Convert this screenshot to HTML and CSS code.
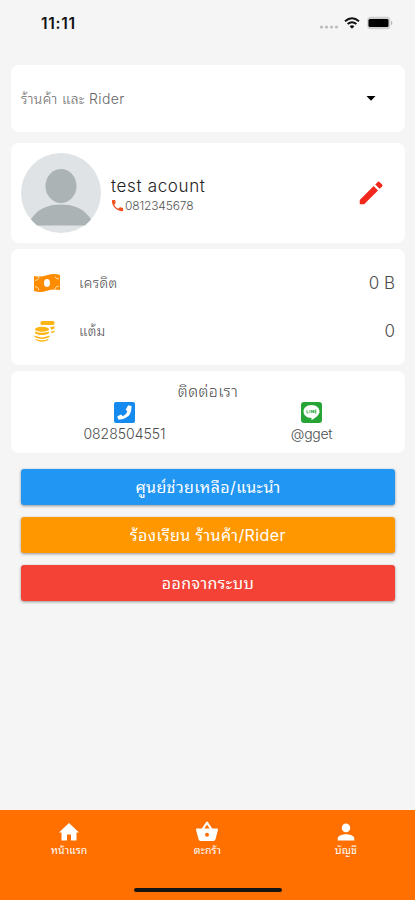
FILE: index.html
```html
<!DOCTYPE html>
<html lang="th">
<head>
<meta charset="utf-8">
<meta name="viewport" content="width=device-width, initial-scale=1">
<title>บัญชี</title>
<link rel="stylesheet" href="styles.css">
</head>
<body>
<div class="app">
  <header class="status">
    <span class="time">11:11</span>
    <div class="signals">
      <svg width="20" height="6" viewBox="0 0 20 6" fill="#bcbcbc"><circle cx="2.5" cy="3" r="1.6"/><circle cx="7.5" cy="3" r="1.6"/><circle cx="12.500" cy="3" r="1.6"/><circle cx="17.500" cy="3" r="1.6"/></svg>
      <svg class="wifi" width="16" height="12" viewBox="0 0 16 12" fill="none" stroke="#111" stroke-width="2"><path d="M1 4.300Q8-1.800 15 4.300M3.600 7.100Q8 3.300 12.400 7.100"/><path d="M5.600 9.200Q8 7.200 10.400 9.200L8 11.800z" fill="#111" stroke="none"/></svg>
      <svg width="27" height="14" viewBox="0 0 27 14"><rect x=".3" y=".8" width="23" height="12.400" rx="3.500" fill="#cfcfcf"/><rect x="1.500" y="3" width="20" height="8" rx="1.500" fill="#000"/><path d="M24.200 4.500q2.200 2.500 0 5z" fill="#aaa"/></svg>
    </div>
  </header>

  <main class="content">
    <section class="card picker">
      <span class="picker-label">ร้านค้า และ Rider</span>
      <svg width="10" height="5" viewBox="0 0 10 5"><path d="M.5 0h9L5 4.800z" fill="#000"/></svg>
    </section>

    <section class="card profile">
      <svg class="avatar" width="80" height="80" viewBox="0 0 80 80"><circle cx="40" cy="40" r="40" fill="#dfe3e5"/><ellipse cx="40" cy="33" rx="15.500" ry="17" fill="#abb3b5"/><path d="M10 66.500Q10.500 65 12 63.500C19 54.500 29 51.500 40 51.500S61 54.500 68 63.500Q69.500 65 70 66.500L64 72.500H16z" fill="#abb3b5"/></svg>
      <div class="who">
        <div class="name">test acount</div>
        <div class="phone">
          <svg width="15" height="15" viewBox="0 0 24 24" fill="#f4511e"><path d="M6.620 10.790c1.440 2.830 3.760 5.140 6.590 6.590l2.200-2.200c.27-.27.670-.36 1.020-.24 1.120.37 2.330.57 3.570.57.550 0 1 .45 1 1V20c0 .55-.45 1-1 1C10.610 21 3 13.390 3 4c0-.55.450-1 1-1h3.500c.55 0 1 .45 1 1 0 1.250.2 2.450.57 3.570.11.350.03.740-.25 1.020z"/></svg>
          <span>0812345678</span>
        </div>
      </div>
      <svg class="edit" width="30" height="30" viewBox="0 0 24 24" fill="#f3281d"><path d="M3 17.500V21h3.500L17.600 9.900l-3.500-3.500zM20.900 6.700a1 1 0 0 0 0-1.410l-2.100-2.100a1 1 0 0 0-1.410 0l-2 2 3.500 3.500z"/></svg>
    </section>

    <section class="card balances">
      <div class="row">
        <svg width="28" height="20" viewBox="0 0 28 20"><path d="M1 3Q7 4.500 14 2.300T27 2V17Q20 15.500 14 17.700T1 18z" fill="#ff8c00"/><path d="M2 7.500Q5.500 7.500 6 4M22 3.500Q22.500 6 26 6M2 13.500Q5.500 14 6 17M22 16Q22.500 13 26 13" fill="none" stroke="#ffe0b5" stroke-width="1"/><ellipse cx="14" cy="10" rx="3" ry="3.900" fill="#fff"/></svg>
        <span class="row-label">เครดิต</span><span class="value">0 B</span>
      </div>
      <div class="row">
        <svg width="28" height="22" viewBox="0 0 28 22" fill="#fdb515"><rect x="7.500" y="1" width="14" height="4" rx="1.500"/><path d="M17 7q3 0 4.500-1v2.300Q20 9.500 18 9.500zM18 11.500q2 0 3.500-1.200V12q-1.500 1-3.500 1z"/><ellipse cx="9" cy="9.200" rx="7" ry="2.500"/><path d="M2 11.500q7 2.700 14 0v1.700q-7 3.800-14 0zM1.500 15.600q7.500 3.600 15 0v1.400q-7.500 4-15 0zM2.500 19q6.500 2.600 13 0v.9q-6.500 3.600-13 0z"/></svg>
        <span class="row-label">แต้ม</span><span class="value">0</span>
      </div>
    </section>

    <section class="card contact">
      <h2>ติดต่อเรา</h2>
      <div class="channels">
        <div class="channel">
          <svg width="21" height="21" viewBox="0 0 21 21"><rect width="21" height="21" rx="2" fill="#168bef"/><path d="M14.200 3.200l3.300.8q.5 9.500-6.500 12.300-3.600 1.700-6.800 1.200l-.9-3.200 3.800-1.900 1.800 1.900q3.400-1.700 4.400-4.900l-1.600-1.900z" fill="#fff"/></svg>
          <span>0828504551</span>
        </div>
        <div class="channel">
          <svg width="21" height="21" viewBox="0 0 21 21"><rect width="21" height="21" rx="3" fill="#26a536"/><path d="M10.500 3c4.700 0 8 2.900 8 6.500 0 3.300-3.800 6.200-8 8.700V16c-4.700 0-8-2.900-8-6.500S5.800 3 10.500 3z" fill="#fff"/><path d="M6 8v3h1.500M9 8v3M10.700 11V8l1.800 3V8M15.500 8H14v3h1.500M14 9.500h1.300" fill="none" stroke="#26a536" stroke-width=".8"/></svg>
          <span class="line-id">@gget</span>
        </div>
      </div>
    </section>

    <div class="actions">
      <button class="btn blue">ศูนย์ช่วยเหลือ/แนะนำ</button>
      <button class="btn amber">ร้องเรียน ร้านค้า/Rider</button>
      <button class="btn red">ออกจากระบบ</button>
    </div>
  </main>

  <nav class="tabs">
    <a class="tab"><svg width="24" height="24" viewBox="0 0 24 24"><path d="M10 20.500v-6h4v6h5.500v-8H22L12 3 2 12.500h2.500v8z"/></svg><span>หน้าแรก</span></a>
    <a class="tab"><svg width="24" height="24" viewBox="0 0 24 24"><path fill-rule="evenodd" d="M17.210 8.500l-4.200-6.300a1.200 1.200 0 0 0-2.020 0L6.790 8.500H2c-.55 0-1 .45-1 1l.04.27 2.540 9.770A2 2 0 0 0 5.500 21h13a2 2 0 0 0 1.930-1.460l2.540-9.770L23 9.500c0-.55-.45-1-1-1zM9.400 8.500l2.600-3.900 2.600 3.900zM12 16.800a2 2 0 1 1 0-4 2 2 0 0 1 0 4z"/></svg><span>ตะกร้า</span></a>
    <a class="tab"><svg width="24" height="24" viewBox="0 0 24 24"><path d="M12 12.300c2.400 0 4.200-1.800 4.200-4.200S14.400 3.500 12 3.500 7.800 5.600 7.800 8.100s1.800 4.200 4.200 4.200zm0 1.900c-2.670 0-8.300 1.340-8.300 4.200v2.100h16.600v-2.100c0-2.860-5.630-4.200-8.300-4.200z"/></svg><span>บัญชี</span></a>
    <div class="home-bar"></div>
  </nav>
</div>
</body>
</html>
```
FILE: styles.css
```css
* { box-sizing: border-box; }

body {
  margin: 0;
  background: #f5f5f5;
  color: #4c4c4c;
  font-family: Inter, "Noto Sans Thai Looped", Loma, Garuda, Waree, "Noto Sans Thai", "Noto Sans", sans-serif;
  font-weight: 300;
}

svg { display: block; flex: none; }

.app { height: 900px; display: flex; flex-direction: column; }

.status {
  height: 65px;
  padding: 14px 21px 0 41px;
  display: flex;
  justify-content: space-between;
  align-items: flex-start;
}
.time { font-size: 15.5px; line-height: 20px; font-weight: 600; letter-spacing: .7px; color: #111; }
.signals { display: flex; align-items: center; height: 18px; }
.signals svg:first-child { margin-top: 8px; }
.wifi { margin: 0 7px 0 5px; }

.content {
  flex: 1;
  padding: 0 10px 0 11px;
  display: flex;
  flex-direction: column;
}
.card { background: #fff; border-radius: 8px; flex: none; }

.picker {
  height: 67px;
  padding: 0 29px 0 10px;
  display: flex;
  align-items: center;
  justify-content: space-between;
}
.picker-label { margin-top: -2px; font-size: 14px; letter-spacing: .35px; color: #666; }

.profile {
  height: 100px;
  margin-top: 11px;
  padding: 0 19px 0 10px;
  display: flex;
  align-items: center;
}
.who { flex: 1; margin: 3px 0 0 10px; }
.name { font-size: 17px; line-height: 21px; letter-spacing: .65px; color: #222; }
.phone { display: flex; align-items: center; height: 16px; font-size: 12px; letter-spacing: -.15px; color: #555; }
.phone svg { margin-left: -1px; }

.balances {
  height: 116px;
  margin-top: 6px;
  padding: 10px 10px 10px 22px;
}
.row { display: flex; align-items: center; height: 48px; }
.row-label { margin: -4px 0 0 18px; flex: 1; font-size: 14px; letter-spacing: .3px; }
.value { font-size: 17px; }

.contact { height: 82px; margin-top: 6px; padding-top: 9px; }
h2 { margin: 0; text-align: center; font-size: 16px; line-height: 22px; letter-spacing: .4px; font-weight: 300; }
.channels { display: grid; grid-template-columns: 1fr 1fr; padding-left: 20px; }
.channel { display: flex; flex-direction: column; align-items: center; font-size: 14px; line-height: 21px; }
.line-id { letter-spacing: -.3px; }

.actions { padding: 16px 10px 0; display: flex; flex-direction: column; gap: 12px; }
.btn {
  height: 36px;
  padding: 0;
  border: 0;
  border-radius: 3px;
  box-shadow: 0 1px 3px rgba(0, 0, 0, .4);
  color: #fff;
  font-family: inherit;
  font-size: 16px;
  font-weight: 400;
  letter-spacing: .4px;
  line-height: 34px;
}
.blue { background: #2196f3; }
.amber { background: #ff9800; }
.red { background: #f44336; }

.tabs {
  position: relative;
  height: 90px;
  display: grid;
  grid-template-columns: repeat(3, 1fr);
  background: #ff7000;
  color: #fff;
}
.tab { display: flex; flex-direction: column; align-items: center; padding-top: 10px; font-size: 10.5px; line-height: 14px; letter-spacing: .1px; font-weight: 400; }
.tab svg { fill: #fff; }
.home-bar {
  position: absolute;
  left: 134px;
  bottom: 8px;
  width: 148px;
  height: 4px;
  border-radius: 2px;
  background: #151515;
}
```
